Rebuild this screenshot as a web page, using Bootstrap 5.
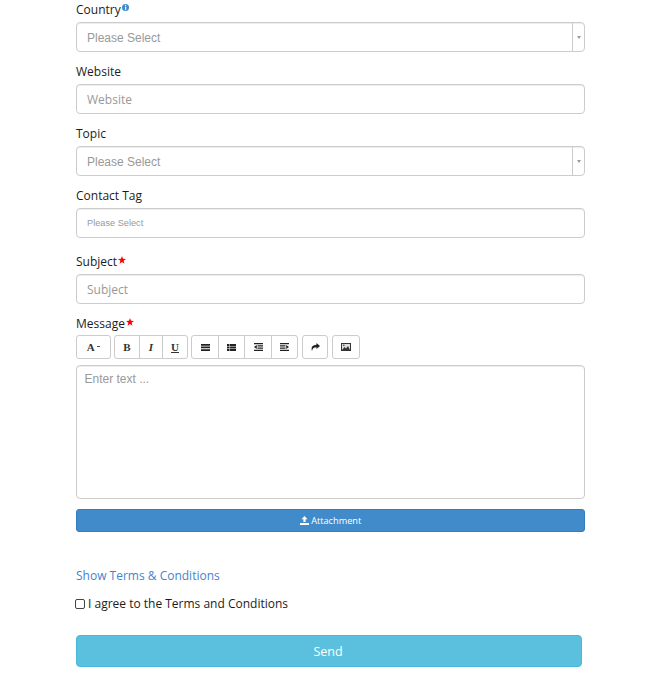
<!DOCTYPE html>
<html lang="en">
<head>
<meta charset="utf-8">
<title>Contact form</title>
<link rel="stylesheet" href="https://cdn.jsdelivr.net/npm/bootstrap@5.3.0/dist/css/bootstrap.min.css">
<style>
html,body{background:#fff;margin:0}
body{font-family:"Open Sans",sans-serif;font-size:12px;color:#222}
.page-form{width:509px;margin-left:76px}
.fld{margin-bottom:10px}
.fld-extra{margin-top:14px}
.fld-label{display:block;height:18px;line-height:20px;margin:0 0 4px;font-size:12px;color:#1c1c1c;white-space:nowrap}
.fld-label svg{vertical-align:top}
.info-ic{margin:4px 0 0 1px}
.req-ic{margin:4px 0 0 1px}
.inp,.inp:focus{height:30px;min-height:30px;padding:0 10px;border:1px solid #ccc;border-radius:4px;font-size:12px;box-shadow:inset 0 1px 1px rgba(0,0,0,.075);color:#555;background:#fff}
.inp::placeholder{color:#999;opacity:1}
.inp-os{font-family:"Open Sans",sans-serif;font-size:12px}
.sel-box{height:30px;border:1px solid #ccc;border-radius:4px;box-shadow:inset 0 1px 1px rgba(0,0,0,.075);background:#fff}
.sel-text{flex:1;padding-left:10px;font:12px/30px "Liberation Sans",sans-serif;color:#999}
.sel-text-sm{font-size:9.200px;line-height:28px}
.sel-arrow{width:12px;border-left:1px solid #ccc}
.sel-tri{width:0;height:0;border-left:2.500px solid transparent;border-right:2.500px solid transparent;border-top:3px solid #999}
.msg-label{margin-bottom:3px}
.tools{height:24px;margin-bottom:6px;gap:3px}
.tools-right{margin-left:1px}
.tb{height:24px;padding:0;border:1px solid #ccc;background:#fff;border-radius:3px;color:#333;display:flex;align-items:center;justify-content:center;font:700 11px "Liberation Serif",serif}
.tb-group{display:flex}
.tb-group .tb{border-radius:0;margin-left:-1px}
.tb-group .tb:first-child{border-radius:3px 0 0 3px;margin-left:0}
.tb-group .tb:last-child{border-radius:0 3px 3px 0}
.msg-area,.msg-area:focus{height:134px;padding:6px 7.500px;border:1px solid #ccc;border-radius:4px;font:12px/1.300 "Liberation Sans",sans-serif;resize:none;box-shadow:inset 0 1px 1px rgba(0,0,0,.075);margin-bottom:10px}
.msg-area::placeholder{color:#999;opacity:1}
.attach{height:23px;padding:0;line-height:21px;font-size:9.200px;border:1px solid #357ebd;border-radius:3px;background:#428bca;color:#fff;font-family:"Open Sans",sans-serif}
.attach:hover{background:#428bca;color:#fff;border-color:#357ebd}
.terms-link{display:block;margin-top:34px;height:18px;line-height:20px;font-size:12px;color:#3f85cc;text-decoration:none}
.agree{margin-top:10px;height:18px;line-height:20px;margin-left:-1px;padding:0;min-height:0;font-size:12px;color:#1c1c1c}
.agree .form-check-input{float:none;width:10px;height:10px;margin:0 3px 0 0;border:1px solid #444;border-radius:2px;vertical-align:-1px}
.send-btn{display:block;width:506px;height:32px;margin-top:23px;padding:0 2px 0 0;background:#5bc0de;border:1px solid #46b8da;border-radius:4px;color:#fff;font:12.500px "Open Sans",sans-serif}
.send-btn:hover{background:#5bc0de;border-color:#46b8da;color:#fff}
</style>
</head>
<body>
<form class="page-form">
  <div class="fld">
    <label class="fld-label">Country<svg class="info-ic" width="7" height="7" viewBox="0 0 7 7"><circle cx="3.500" cy="3.500" r="3.500" fill="#428bca"/><rect x="3" y="1" width="1.200" height="1.200" fill="#fff"/><rect x="3" y="2.800" width="1.200" height="3" fill="#fff"/></svg></label>
    <div class="sel-box d-flex"><span class="sel-text">Please Select</span><span class="sel-arrow d-flex align-items-center justify-content-center"><span class="sel-tri"></span></span></div>
  </div>
  <div class="fld">
    <label class="fld-label">Website</label>
    <input class="form-control inp inp-os" type="text" placeholder="Website">
  </div>
  <div class="fld">
    <label class="fld-label">Topic</label>
    <div class="sel-box d-flex"><span class="sel-text">Please Select</span><span class="sel-arrow d-flex align-items-center justify-content-center"><span class="sel-tri"></span></span></div>
  </div>
  <div class="fld">
    <label class="fld-label">Contact Tag</label>
    <div class="sel-box d-flex"><span class="sel-text sel-text-sm">Please Select</span></div>
  </div>
  <div class="fld fld-extra">
    <label class="fld-label">Subject<svg class="req-ic" width="8" height="8" viewBox="0 0 8 8"><path d="M4 0l1 2.800 3 .1-2.400 1.800.9 3L4 6 1.500 7.700l.9-3L0 2.900l3-.1z" fill="#f00"/></svg></label>
    <input class="form-control inp inp-os" type="text" placeholder="Subject">
  </div>
  <label class="fld-label msg-label">Message<svg class="req-ic" width="8" height="8" viewBox="0 0 8 8"><path d="M4 0l1 2.800 3 .1-2.400 1.800.9 3L4 6 1.500 7.700l.9-3L0 2.900l3-.1z" fill="#f00"/></svg></label>
  <div class="tools d-flex">
    <button type="button" class="tb" style="width:35px">A&nbsp;<svg width="3" height="2" viewBox="0 0 3 2"><rect y="0" width="3" height="1" fill="#555"/></svg></button>
    <div class="tb-group">
      <button type="button" class="tb" style="width:26px">B</button>
      <button type="button" class="tb" style="width:24px"><i>I</i></button>
      <button type="button" class="tb" style="width:26px"><u>U</u></button>
    </div>
    <div class="tb-group">
      <button type="button" class="tb" style="width:28px"><svg width="9" height="7" viewBox="0 0 9 7" fill="#222"><path d="M0 0h9v1.700H0zM0 2.600h9v1.700H0zM0 5.300h9V7H0z"/></svg></button>
      <button type="button" class="tb" style="width:27px"><svg width="9" height="7" viewBox="0 0 9 7" fill="#222"><path d="M0 0h2.500v2H0zM3 0h6v2H3zM0 2.500h2.500v2H0zM3 2.500h6v2H3zM0 5h2.500v2H0zM3 5h6v2H3z"/></svg></button>
      <button type="button" class="tb" style="width:28px"><svg width="9" height="8" viewBox="0 0 9 8" fill="#222"><path d="M0 0h9v1.200H0zM3.500 2.300H9v1.200H3.500zM3.500 4.500H9v1.200H3.500zM0 6.800h9V8H0zM2.800 2v4L0 4z"/></svg></button>
      <button type="button" class="tb" style="width:27px"><svg width="9" height="8" viewBox="0 0 9 8" fill="#222"><path d="M0 0h9v1.200H0zM0 2.300h5.500v1.200H0zM0 4.500h5.500v1.200H0zM0 6.800h9V8H0zM6.200 2v4L9 4z"/></svg></button>
    </div>
    <button type="button" class="tb tools-right" style="width:26px"><svg width="9" height="8" viewBox="0 0 9 8" fill="#222"><path d="M5.500 0L9 3 5.500 6V4.200C3 4.200 1.500 5 1 8 0 5 .8 2 5.500 1.800z"/></svg></button>
    <button type="button" class="tb tools-right" style="width:28px"><svg width="10" height="8" viewBox="0 0 10 8"><rect x=".5" y=".5" width="9" height="7" fill="#ddd" stroke="#333"/><path d="M1 7l2.500-3 1.500 1.500L7 3l2 4z" fill="#333"/><circle cx="2.800" cy="2.300" r=".8" fill="#333"/></svg></button>
  </div>
  <textarea class="form-control msg-area d-block" placeholder="Enter text ..."></textarea>
  <button type="button" class="btn attach w-100 d-block"><svg width="9" height="9" viewBox="0 0 9 9" fill="#fff" style="vertical-align:-1px"><path d="M4.500 0L7.500 3.200H5.600V6H3.400V3.200H1.500zM0 7h9v2H0z"/></svg> Attachment</button>
  <a class="terms-link" href="#">Show Terms &amp; Conditions</a>
  <div class="form-check agree"><input class="form-check-input" type="checkbox" id="agree"><label for="agree">I agree to the Terms and Conditions</label></div>
  <button type="button" class="btn send-btn">Send</button>
</form>
</body>
</html>
